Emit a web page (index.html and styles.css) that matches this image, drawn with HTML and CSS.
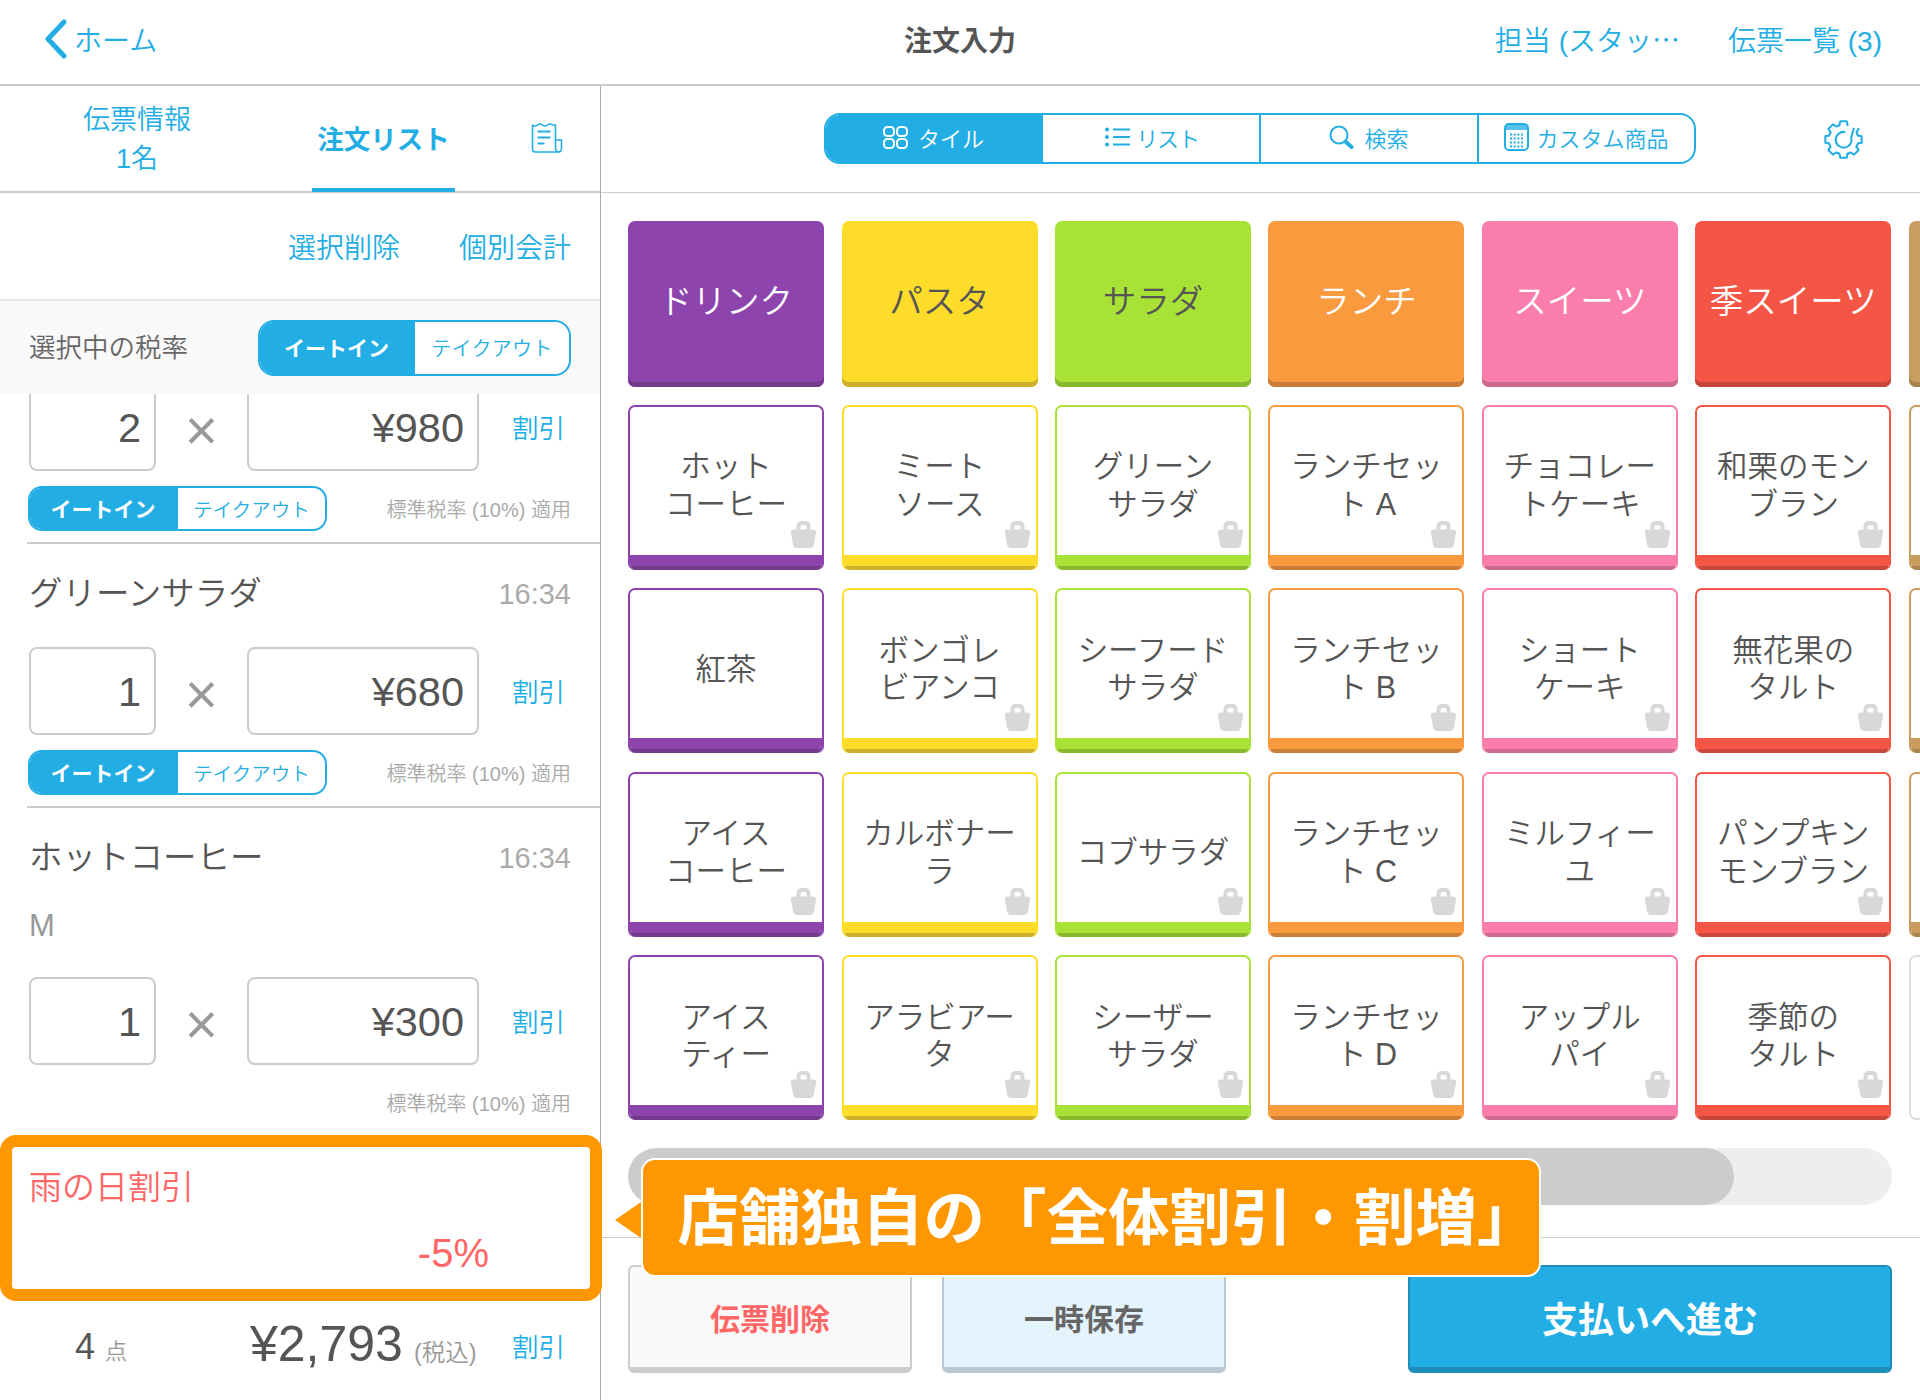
FILE: index.html
```html
<!DOCTYPE html>
<html lang="ja">
<head>
<meta charset="utf-8">
<title>注文入力</title>
<link rel="stylesheet" href="styles.css">
</head>
<body>
<svg class="defs" width="0" height="0" aria-hidden="true">
  <symbol id="bag" viewBox="0 0 27 27">
    <path d="M8.500 11V5.500Q8.500 2 12 2H15Q18.500 2 18.500 5.500V11" fill="none" stroke="currentColor" stroke-width="4"/>
    <path d="M1 12Q.5 8.500 3.500 8.500H23.500Q26.500 8.500 26 12L24 23Q23.500 27 20 27H7Q3.500 27 3 23Z" fill="currentColor"/>
  </symbol>
</svg>
<div class="app">
  <header class="topbar">
    <a class="back">
      <svg class="chevron" viewBox="0 0 24 40"><path d="M20 3 4 20 20 37" fill="none" stroke="currentColor" stroke-width="5" stroke-linecap="round" stroke-linejoin="round"/></svg>
      <span>ホーム</span>
    </a>
    <h1 class="title">注文入力</h1>
    <nav class="topnav">
      <a>担当 (スタッ<span class="ell">…</span></a>
      <a>伝票一覧 (3)</a>
    </nav>
  </header>

  <main class="body">
    <section class="left">
      <div class="tabs">
        <a class="tab tab-info">伝票情報<br>1名</a>
        <a class="tab tab-active">注文リスト</a>
        <a class="tab-icon">
          <svg viewBox="0 0 32 30" width="33" height="30" fill="none" stroke="currentColor"><path d="M2 2Q4.500 4 7 2T12 2T17 2T22 2L25 2V25Q25 29 29 29H5Q2 29 2 26Z" stroke-width="1.600" stroke-linejoin="round"/><path d="M25 17H31V25Q31 29 28 29" stroke-width="1.600"/><path d="M7 8.500H20M7 14.500H20M7 20.500H14" stroke-width="2"/></svg>
        </a>
      </div>
      <div class="actions">
        <a>選択削除</a>
        <a>個別会計</a>
      </div>
      <div class="taxbar">
        <span class="taxlabel">選択中の税率</span>
        <div class="seg seg-large"><span class="seg-on">イートイン</span><span class="seg-off">テイクアウト</span></div>
      </div>
      <div class="list">
        <div class="list-inner">
          <article class="item">
            <div class="item-head"></div>
            <div class="qtyrow">
              <div class="numbox qty">2</div>
              <div class="times">×</div>
              <div class="numbox price">¥980</div>
              <a class="disc">割引</a>
            </div>
            <div class="taxrow">
              <div class="seg"><span class="seg-on">イートイン</span><span class="seg-off">テイクアウト</span></div>
              <span class="note">標準税率 (10%) 適用</span>
            </div>
          </article>
          <article class="item">
            <div class="item-head"><span class="item-name">グリーンサラダ</span><span class="item-time">16:34</span></div>
            <div class="qtyrow">
              <div class="numbox qty">1</div>
              <div class="times">×</div>
              <div class="numbox price">¥680</div>
              <a class="disc">割引</a>
            </div>
            <div class="taxrow">
              <div class="seg"><span class="seg-on">イートイン</span><span class="seg-off">テイクアウト</span></div>
              <span class="note">標準税率 (10%) 適用</span>
            </div>
          </article>
          <article class="item item-last">
            <div class="item-head"><span class="item-name">ホットコーヒー</span><span class="item-time">16:34</span></div>
            <div class="modifier">M</div>
            <div class="qtyrow">
              <div class="numbox qty">1</div>
              <div class="times">×</div>
              <div class="numbox price">¥300</div>
              <a class="disc">割引</a>
            </div>
            <div class="taxrow taxrow-end">
              <span class="note">標準税率 (10%) 適用</span>
            </div>
          </article>
        </div>
      </div>
      <div class="discount">
        <div class="discount-name">雨の日割引</div>
        <div class="discount-value">-5%</div>
      </div>
      <footer class="total">
        <span class="count">4<small>点</small></span>
        <span class="sum">¥2,793<small>(税込)</small></span>
        <a class="disc">割引</a>
      </footer>
    </section>

    <section class="right">
      <div class="toolbar">
        <div class="modes">
          <a class="mode mode-on">
            <svg viewBox="0 0 25 23" width="25" height="23" fill="none" stroke="currentColor" stroke-width="2"><rect x="1" y="1" width="10" height="9" rx="3.500"/><rect x="14" y="1" width="10" height="9" rx="3.500"/><rect x="1" y="13" width="10" height="9" rx="3.500"/><rect x="14" y="13" width="10" height="9" rx="3.500"/></svg>
            タイル
          </a>
          <a class="mode mode-list">
            <svg viewBox="0 0 25 20" width="25" height="20" fill="currentColor"><circle cx="2" cy="2.500" r="2"/><circle cx="2" cy="10" r="2"/><circle cx="2" cy="17.500" r="2"/><path d="M8 1.500H25V3.500H8ZM8 9H25V11H8ZM8 16.500H25V18.500H8Z"/></svg>
            リスト
          </a>
          <a class="mode">
            <svg viewBox="0 0 25 24" width="25" height="24" fill="none" stroke="currentColor"><circle cx="10" cy="10" r="8.500" stroke-width="2"/><path d="M17 17 22.500 22" stroke-width="4" stroke-linecap="round"/></svg>
            検索
          </a>
          <a class="mode mode-custom">
            <svg viewBox="0 0 25 28" width="25" height="28"><rect x="1" y="1" width="23" height="26" rx="4" fill="none" stroke="currentColor" stroke-width="2"/><path d="M1 7V5Q1 1 5 1H20Q24 1 24 5V7Z" fill="currentColor" opacity=".75"/><path d="M6 11.500H19M6 15.500H19M6 19.500H19M6 23.500H19" fill="none" stroke="currentColor" stroke-width="2" stroke-dasharray="2 1.700"/></svg>
            カスタム商品
          </a>
        </div>
        <a class="gear">
          <svg viewBox="0 0 40 40" width="41" height="41" fill="none" stroke="currentColor" stroke-width="2" stroke-linejoin="round" stroke-linecap="round">
            <path d="M16 6.060 16.870 2.270H23.130L24 6.060"/>
            <path d="M23.130 2.270 24 6.060 27.030 7.320" transform="rotate(45 20 20)"/>
            <path d="M16 6.060 16.870 2.270H23.130L24 6.060 27.030 7.320" transform="rotate(90 20 20)"/>
            <path d="M16 6.060 16.870 2.270H23.130L24 6.060 27.030 7.320" transform="rotate(135 20 20)"/>
            <path d="M16 6.060 16.870 2.270H23.130L24 6.060 27.030 7.320" transform="rotate(180 20 20)"/>
            <path d="M16 6.060 16.870 2.270H23.130L24 6.060 27.030 7.320" transform="rotate(225 20 20)"/>
            <path d="M16 6.060 16.870 2.270H23.130L24 6.060 27.030 7.320" transform="rotate(270 20 20)"/>
            <path d="M16 6.060 16.870 2.270H23.130L24 6.060 27.030 7.320" transform="rotate(315 20 20)"/>
            <path d="M21 12.600A7.700 7.700 0 1 0 27.500 18L30 9.500"/>
          </svg>
        </a>
      </div>

      <div class="grid-wrap">
        <div class="grid">
          <div class="cat c-purple">ドリンク</div>
          <div class="cat cat-dark c-yellow">パスタ</div>
          <div class="cat cat-dark c-green">サラダ</div>
          <div class="cat c-orange">ランチ</div>
          <div class="cat c-pink">スイーツ</div>
          <div class="cat c-red">季スイーツ</div>
          <div class="cat c-tan"></div>

          <div class="tile c-purple">ホット<br>コーヒー<svg class="bag"><use href="#bag"/></svg></div>
          <div class="tile c-yellow">ミート<br>ソース<svg class="bag"><use href="#bag"/></svg></div>
          <div class="tile c-green">グリーン<br>サラダ<svg class="bag"><use href="#bag"/></svg></div>
          <div class="tile c-orange">ランチセッ<br>ト A<svg class="bag"><use href="#bag"/></svg></div>
          <div class="tile c-pink">チョコレー<br>トケーキ<svg class="bag"><use href="#bag"/></svg></div>
          <div class="tile c-red">和栗のモン<br>ブラン<svg class="bag"><use href="#bag"/></svg></div>
          <div class="tile c-tan"></div>

          <div class="tile c-purple">紅茶</div>
          <div class="tile c-yellow">ボンゴレ<br>ビアンコ<svg class="bag"><use href="#bag"/></svg></div>
          <div class="tile c-green">シーフード<br>サラダ<svg class="bag"><use href="#bag"/></svg></div>
          <div class="tile c-orange">ランチセッ<br>ト B<svg class="bag"><use href="#bag"/></svg></div>
          <div class="tile c-pink">ショート<br>ケーキ<svg class="bag"><use href="#bag"/></svg></div>
          <div class="tile c-red">無花果の<br>タルト<svg class="bag"><use href="#bag"/></svg></div>
          <div class="tile c-tan"></div>

          <div class="tile c-purple">アイス<br>コーヒー<svg class="bag"><use href="#bag"/></svg></div>
          <div class="tile c-yellow">カルボナー<br>ラ<svg class="bag"><use href="#bag"/></svg></div>
          <div class="tile c-green">コブサラダ<svg class="bag"><use href="#bag"/></svg></div>
          <div class="tile c-orange">ランチセッ<br>ト C<svg class="bag"><use href="#bag"/></svg></div>
          <div class="tile c-pink">ミルフィー<br>ユ<svg class="bag"><use href="#bag"/></svg></div>
          <div class="tile c-red">パンプキン<br>モンブラン<svg class="bag"><use href="#bag"/></svg></div>
          <div class="tile c-tan"></div>

          <div class="tile c-purple">アイス<br>ティー<svg class="bag"><use href="#bag"/></svg></div>
          <div class="tile c-yellow">アラビアー<br>タ<svg class="bag"><use href="#bag"/></svg></div>
          <div class="tile c-green">シーザー<br>サラダ<svg class="bag"><use href="#bag"/></svg></div>
          <div class="tile c-orange">ランチセッ<br>ト D<svg class="bag"><use href="#bag"/></svg></div>
          <div class="tile c-pink">アップル<br>パイ<svg class="bag"><use href="#bag"/></svg></div>
          <div class="tile c-red">季節の<br>タルト<svg class="bag"><use href="#bag"/></svg></div>
          <div class="tile-blank"></div>
        </div>
      </div>

      <div class="scroll"><div class="scroll-thumb"></div></div>

      <div class="buttons">
        <button class="btn btn-delete">伝票削除</button>
        <button class="btn btn-hold">一時保存</button>
        <button class="btn btn-pay">支払いへ進む</button>
      </div>
    </section>
  </main>

  <div class="callout">店舗独自の「全体割引・割増」</div>
</div>
</body>
</html>
```

FILE: styles.css
```css
* { box-sizing: border-box; }
html, body { margin: 0; padding: 0; background: #fff; }
body {
  font-family: "Liberation Sans", "Noto Sans CJK JP", sans-serif;
  color: #555;
  font-weight: 350;
}
a { color: #22aee5; text-decoration: none; }
.defs { position: absolute; }

.app { position: relative; width: 1920px; height: 1400px; overflow: hidden; display: flex; flex-direction: column; }

/* top bar */
.topbar {
  height: 86px;
  flex: none;
  display: grid;
  grid-template-columns: 1fr auto 1fr;
  align-items: center;
  border-bottom: 2px solid #ccc;
  padding: 0 38px 6px;
  font-size: 28px;
}
.back { display: flex; align-items: center; gap: 6px; margin-left: 6px; }
.chevron { width: 24px; height: 40px; }
.title { margin: 0; font-size: 28px; font-weight: 700; color: #555; }
.topnav { display: flex; justify-content: flex-end; gap: 48px; }
.ell { font-family: "Noto Sans CJK JP", sans-serif; }

.body { flex: 1; display: flex; min-height: 0; }

/* left column */
.left { width: 601px; flex: none; display: flex; flex-direction: column; border-right: 1px solid #aaa; position: relative; }
.tabs {
  height: 107px;
  flex: none;
  display: flex;
  border-bottom: 2px solid #ccc;
  position: relative;
}
.tab { font-size: 27px; text-align: center; display: flex; align-items: center; justify-content: center; }
.tab-info { width: 312px; line-height: 39px; padding: 3px 38px 0 0; }
.tab-active { width: 143px; font-weight: 700; font-size: 26.500px; border-bottom: 4px solid #22aee5; margin-bottom: -1px; white-space: nowrap; }
.tab-icon { flex: 1; display: flex; align-items: center; justify-content: flex-end; padding: 0 37px 2px 0; }

.actions {
  height: 106px;
  flex: none;
  display: flex;
  justify-content: flex-end;
  align-items: center;
  gap: 59px;
  padding: 0 29px 1px 0;
  font-size: 28px;
}
.taxbar {
  height: 95px;
  flex: none;
  background: #f9f9f9;
  border-top: 2px solid #e8e8e8;
  display: flex;
  align-items: center;
  justify-content: space-between;
  padding: 0 29px;
  font-size: 26.500px;
}
.taxlabel { color: #666; padding-bottom: 4px; }

/* segmented small control */
.seg {
  display: flex;
  width: 299px;
  height: 45px;
  margin-left: -1px;
  border: 2px solid #22aee5;
  border-radius: 14px;
  overflow: hidden;
  background: #fff;
  font-size: 19.500px;
  align-items: stretch;
}
.seg-on { width: 148px; background: #22aee5; color: #fff; font-weight: 700; display: flex; align-items: center; justify-content: center; font-size: 21px; padding: 0 2px 1px 0; }
.seg-off { flex: 1; color: #22aee5; display: flex; align-items: center; justify-content: center; padding-bottom: 1px; }
.seg-large { width: 313px; height: 56px; margin: 0; border-radius: 16px; font-size: 20px; }
.seg-large .seg-on { width: 155px; }
.seg-large .seg-off { letter-spacing: .300px; }

/* order list */
.list { height: 741px; flex: none; overflow: hidden; }
.list-inner { margin-top: -114px; }
.item { margin-left: 27px; padding: 0 29px 12px 2px; border-bottom: 2px solid #ccc; height: 264px; }
.item-last { border-bottom: 0; height: auto; }
.item-head { display: flex; justify-content: space-between; align-items: center; padding-top: 28px; height: 72px; margin-bottom: 31px; }
.item-name { font-size: 33.500px; line-height: 44px; color: #555; }
.item-time { font-size: 29px; color: #aaa; }
.modifier { font-size: 31px; line-height: 30px; height: 30px; margin: 1px 0 36px; color: #999; }
.qtyrow { display: flex; align-items: center; height: 88px; }
.numbox {
  height: 88px;
  border: 2px solid #ccc;
  border-radius: 8px;
  display: flex;
  align-items: center;
  justify-content: flex-end;
  font-size: 41.500px;
  padding: 1px 13px 0 0;
  color: #555;
}
.qty { width: 127px; }
.price { width: 232px; }
.times { width: 91px; text-align: center; font-size: 57px; line-height: 88px; color: #999; padding-top: 5px; }
.disc { font-size: 26.500px; margin-left: auto; padding: 0 6px 2px 0; }
.taxrow { display: flex; align-items: center; justify-content: space-between; height: 45px; margin-top: 15px; }
.taxrow-end { justify-content: flex-end; }
.note { font-size: 20px; color: #aaa; }

/* highlighted discount */
.discount {
  position: relative;
  z-index: 2;
  width: 602px;
  height: 166px;
  flex: none;
  border: 12px solid #ff9800;
  border-radius: 16px;
  background: #fff;
  padding: 0 0 0 17px;
}
.discount-name { font-size: 33px; line-height: 44px; margin-top: 19px; color: #f66; }
.discount-value { font-size: 40px; line-height: 44px; margin-top: 21px; text-align: right; padding-right: 101px; color: #f66; }

.total {
  flex: 1;
  display: flex;
  align-items: center;
  padding: 0 29px 7px 75px;
  margin-top: -2px;
}
.count { font-size: 36px; width: 175px; padding-top: 2px; }
.count small { font-size: 22px; color: #999; margin-left: 10px; }
.sum { font-size: 50px; white-space: nowrap; margin-bottom: 4px; }
.sum small { font-size: 23.500px; color: #999; margin-left: 11px; }

/* right column */
.right { flex: 1; display: flex; flex-direction: column; min-width: 0; }
.toolbar {
  height: 107px;
  flex: none;
  display: flex;
  align-items: center;
  justify-content: space-between;
  padding: 0 56px 2px 223px;
  border-bottom: 1px solid #ccc;
}
.modes {
  display: flex;
  width: 872px;
  height: 51px;
  border: 2px solid #22aee5;
  border-radius: 16px;
  overflow: hidden;
}
.mode {
  flex: 0 0 218px;
  display: flex;
  align-items: center;
  justify-content: center;
  gap: 10px;
  font-size: 22px;
  padding-bottom: 2px;
  border-right: 2px solid #22aee5;
  color: #22aee5;
}
.mode:last-child { border-right: 0; flex: 1; }
.mode-on { background: #22aee5; color: #fff; flex-basis: 217px; }
.mode-list { gap: 6px; letter-spacing: -1.200px; padding-left: 2px; }
.mode-custom { gap: 7px; }
.gear { display: block; height: 41px; margin-top: 2px; }

.grid-wrap { padding: 28px 0 0 27.100px; overflow: hidden; flex: none; }
.grid {
  display: grid;
  grid-template-columns: repeat(7, 196px);
  grid-template-rows: 165.500px repeat(4, 165px);
  column-gap: 17.450px;
  row-gap: 18.400px;
  width: 1400px;
}
.cat, .tile {
  position: relative;
  border-radius: 7px;
  display: flex;
  align-items: center;
  justify-content: center;
  text-align: center;
  overflow: hidden;
}
.cat {
  background: var(--c);
  box-shadow: inset 0 -5px 0 var(--d);
  color: #fff;
  font-size: 33.500px;
  padding-bottom: 10px;
}
.cat-dark { color: #555; }
.tile {
  background: #fff;
  border: 2px solid var(--c);
  border-bottom: 0;
  font-size: 30.500px;
  line-height: 37.500px;
  color: #555;
  padding-bottom: 5px;
}
.tile::after {
  content: "";
  position: absolute;
  left: 0;
  right: 0;
  bottom: 0;
  height: 15px;
  background: linear-gradient(var(--c) 11px, var(--d) 11px);
}
.tile-blank { border: 2px solid #ddd; border-radius: 7px; }
.bag { position: absolute; right: 5px; bottom: 22px; width: 27px; height: 27px; color: #d8d8d8; }

.c-purple { --c: #8e44ad; --d: #733a8c; }
.c-yellow { --c: #fddc2a; --d: #cdb12a; }
.c-green { --c: #a8e237; --d: #89b82f; }
.c-orange { --c: #f99a3e; --d: #ca7d36; }
.c-pink { --c: #fb7dab; --d: #cc6a8e; }
.c-red { --c: #f55545; --d: #c8473b; }
.c-tan { --c: #c99c5f; --d: #a8824f; }

.scroll { height: 57px; margin: 28px 28px 32px 27px; border-radius: 29px; background: #eee; flex: none; overflow: hidden; }
.scroll-thumb { width: 1106px; height: 100%; background: #ccc; border-radius: 29px; }

.buttons {
  flex: none;
  display: flex;
  border-top: 1px solid #ccc;
  padding: 27px 28px 0 27px;
  gap: 30px;
}
.btn {
  height: 108px;
  border-radius: 6px;
  font-family: inherit;
  font-weight: 700;
  font-size: 30px;
  padding: 0;
  border-style: solid;
  border-width: 2px 2px 6px;
}
.btn-delete { width: 284px; background: #f9f9f9; border-color: #ccc; color: #f66; }
.btn-hold { width: 284px; background: #e5f3fd; border-color: #b8c8d4; color: #666; }
.btn-pay { width: 484px; margin-left: auto; background: #22aee5; border-color: #1d8dba; color: #fff; font-size: 36px; }

/* annotation */
.callout {
  position: absolute;
  left: 641px;
  top: 1158px;
  width: 900px;
  height: 119px;
  z-index: 5;
  background: #ff9800;
  color: #fff;
  border: 2px solid #fff;
  border-radius: 14px;
  font-size: 61.500px;
  font-weight: 700;
  display: flex;
  align-items: center;
  justify-content: center;
  white-space: nowrap;
  padding: 0 0 8px 34px;
}
.callout::before {
  content: "";
  position: absolute;
  left: -28px;
  top: 42px;
  border-style: solid;
  border-width: 18px 26px 18px 0;
  border-color: transparent #ff9800 transparent transparent;
}
```
